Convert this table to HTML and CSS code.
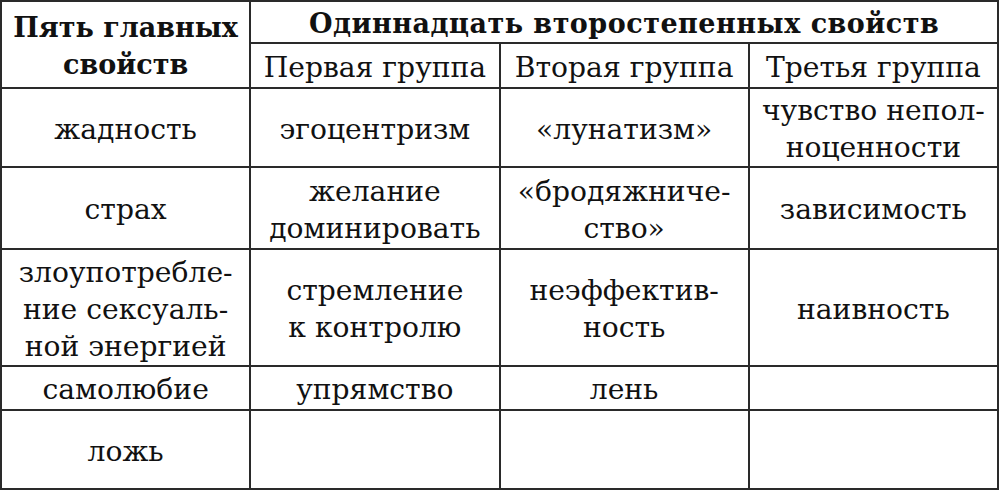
FILE: index.html
```html
<!DOCTYPE html>
<html lang="ru">
<head>
<meta charset="utf-8">
<link rel="stylesheet" href="styles.css">
</head>
<body>
<table class="grid">
  <colgroup><col class="c"><col class="c"><col class="c"><col class="c"></colgroup>
  <tr class="h1">
    <th rowspan="2" class="main">Пять главных<br>свойств</th>
    <th colspan="3" class="main wide">Одиннадцать второстепенных свойств</th>
  </tr>
  <tr class="h2">
    <td>Первая группа</td>
    <td>Вторая группа</td>
    <td>Третья группа</td>
  </tr>
  <tr class="r1">
    <td>жадность</td>
    <td>эгоцентризм</td>
    <td>«лунатизм»</td>
    <td>чувство непол-<br>ноценности</td>
  </tr>
  <tr class="r2">
    <td>страх</td>
    <td>желание<br>доминировать</td>
    <td>«бродяжниче-<br>ство»</td>
    <td>зависимость</td>
  </tr>
  <tr class="r3">
    <td>злоупотребле-<br>ние сексуаль-<br>ной энергией</td>
    <td>стремление<br>к контролю</td>
    <td>неэффектив-<br>ность</td>
    <td>наивность</td>
  </tr>
  <tr class="r4">
    <td>самолюбие</td>
    <td>упрямство</td>
    <td>лень</td>
    <td></td>
  </tr>
  <tr class="r5">
    <td>ложь</td>
    <td></td>
    <td></td>
    <td></td>
  </tr>
</table>
</body>
</html>
```

FILE: styles.css
```css
html, body {
  margin: 0;
  padding: 0;
  background: #fff;
}
.grid {
  border-collapse: collapse;
  table-layout: fixed;
  width: 999px;
  font-family: "DejaVu Serif", "Liberation Serif", serif;
  color: #111;
  font-size: 28.2px;
  line-height: 37px;
}
.grid .c { width: 25%; }
.grid th, .grid td {
  border: 2px solid #2a2a2a;
  text-align: center;
  vertical-align: middle;
  padding: 3px 2px 0;
  font-weight: normal;
  white-space: nowrap;
}
.grid th.main {
  font-weight: bold;
  font-size: 27px;
  line-height: 37px;
  padding-top: 2px;
}
.grid th.wide { letter-spacing: 0.5px; }
.h1 { height: 42px; }
.h2 { height: 45px; }
.r1 { height: 79px; }
.r2 { height: 82px; }
.r3 { height: 117px; }
.r4 { height: 44px; }
.r5 { height: 79px; }
```
